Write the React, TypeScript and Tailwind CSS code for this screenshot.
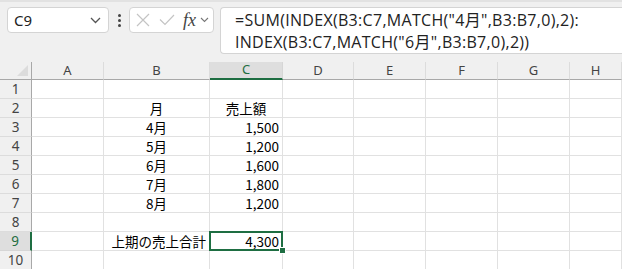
import { Fragment } from "react";

const cols = ["A", "B", "C", "D", "E", "F", "G", "H"];

// cell contents keyed by row number
const data: Record<number, { b?: string; c?: string; bAlign?: string; cAlign?: string }> = {
  2: { b: "月", c: "売上額", cAlign: "center" },
  3: { b: "4月", c: "1,500" },
  4: { b: "5月", c: "1,200" },
  5: { b: "6月", c: "1,600" },
  6: { b: "7月", c: "1,800" },
  7: { b: "8月", c: "1,200" },
  9: { b: "上期の売上合計", c: "4,300", bAlign: "right" },
};

const cellFont = { fontFamily: '"Noto Sans CJK JP", "Noto Sans", sans-serif' };

const App = () => {
  const rows = [1, 2, 3, 4, 5, 6, 7, 8, 9, 10];

  return (
    <div className="w-[622px] h-[269px] overflow-hidden bg-[#f0f0f0] flex flex-col font-['Noto_Sans',sans-serif]">
      {/* Formula bar */}
      <div className="h-[62px] shrink-0 border-t-2 border-[#e2e2e2] flex items-start pt-[5px]">
        {/* Name box */}
        <div className="ml-[7px] w-[102px] h-[26px] rounded-[4px] border border-[#d4d4d4] bg-white flex items-center justify-between pl-[6px] pr-[7px]">
          <span className="text-[15px] text-[#222] leading-none">C9</span>
          <svg width="11" height="7" viewBox="0 0 11 7">
            <path d="M1 1 L5.5 5.5 L10 1" fill="none" stroke="#555" strokeWidth="1.3" />
          </svg>
        </div>
        {/* vertical dots */}
        <div className="w-[20px] h-[26px] flex flex-col items-center justify-center gap-[2px]">
          <span className="w-[3px] h-[3px] rounded-full bg-[#444]" />
          <span className="w-[3px] h-[3px] rounded-full bg-[#444]" />
          <span className="w-[3px] h-[3px] rounded-full bg-[#444]" />
        </div>
        {/* cancel / enter / fx */}
        <div className="w-[85px] h-[26px] rounded-[4px] border border-[#d4d4d4] bg-white flex items-center pl-[6px]">
          <svg width="14" height="14" viewBox="0 0 14 14">
            <path d="M1 1 L13 13 M13 1 L1 13" stroke="#c4c4c4" strokeWidth="1.2" />
          </svg>
          <svg width="16" height="12" viewBox="0 0 16 12" className="ml-[9px]">
            <path d="M1 5.5 L6 10.5 L15 1" fill="none" stroke="#c4c4c4" strokeWidth="1.2" />
          </svg>
          <span className="ml-[8px] text-[18px] italic text-[#444] leading-none font-['Liberation_Serif',serif]">
            fx
          </span>
          <svg width="9" height="6" viewBox="0 0 9 6" className="ml-[4px]">
            <path d="M1 1 L4.5 4.5 L8 1" fill="none" stroke="#777" strokeWidth="1.1" />
          </svg>
        </div>
        {/* Formula */}
        <div className="ml-[6px] flex-1 h-[47px] rounded-l-[4px] border border-r-0 border-[#d4d4d4] bg-white pl-[14px] pt-[1px] text-[16px] tracking-[0.3px] leading-[22px] text-[#222] whitespace-nowrap font-['Open_Sans','Noto_Sans_CJK_JP',sans-serif]">
          <div>=SUM(INDEX(B3:C7,MATCH("4月",B3:B7,0),2):</div>
          <div>INDEX(B3:C7,MATCH("6月",B3:B7,0),2))</div>
        </div>
      </div>

      {/* Sheet grid */}
      <div className="grid grid-cols-[32px_72px_106px_73px_71px_72px_72px_72px_52px] grid-rows-[18px_repeat(10,19px)] bg-white">
        {/* corner */}
        <div className="bg-[#f0f0f0] border-b border-r border-[#a8a8a8] relative">
          <div className="absolute right-[3px] bottom-[3px] w-0 h-0 border-l-[11px] border-l-transparent border-b-[11px] border-b-[#dcdcdc]" />
        </div>
        {cols.map((c) =>
          c === "C" ? (
            <div
              key={c}
              className="bg-[#dedede] border-b-2 border-[#1e6e42] border-r border-r-[#d6d6d6] flex items-center justify-center text-[13px] text-[#1e6e42]"
            >
              {c}
            </div>
          ) : (
            <div
              key={c}
              className="bg-[#f0f0f0] border-b border-b-[#a8a8a8] border-r border-r-[#dcdcdc] flex items-center justify-center text-[13px] text-[#444]"
            >
              {c}
            </div>
          )
        )}

        {rows.map((r) => {
          const d = data[r] || {};
          const active = r === 9;
          return (
            <Fragment key={r}>
              {active ? (
                <div className="bg-[#dedede] border-r-2 border-r-[#1e6e42] border-b border-b-[#d6d6d6] flex items-center justify-center text-[13.5px] text-[#1e6e42]">
                  {r}
                </div>
              ) : (
                <div className="bg-[#f0f0f0] border-r border-r-[#a8a8a8] border-b border-b-[#dcdcdc] flex items-center justify-center text-[13.5px] text-[#444]">
                  {r}
                </div>
              )}
              {cols.map((c) => {
                let text = "";
                let align = "justify-end";
                if (c === "B" && d.b) {
                  text = d.b;
                  align = d.bAlign === "right" ? "justify-end" : "justify-center";
                }
                if (c === "C" && d.c) {
                  text = d.c;
                  align = d.cAlign === "center" ? "justify-center" : "justify-end";
                }
                const isActive = active && c === "C";
                return (
                  <div
                    key={c}
                    style={cellFont}
                    className={`relative border-r border-b border-[#e1e1e1] flex items-center px-[3px] text-[13.5px] text-black whitespace-nowrap ${align} ${isActive ? "z-10" : ""}`}
                  >
                    {text}
                    {isActive && (
                      <>
                        <div className="absolute -left-[1px] -top-[1px] -right-[1px] -bottom-[1px] border-2 border-[#1e6e42]" />
                        <div className="absolute -right-[4px] -bottom-[4px] w-[7px] h-[7px] bg-[#1e6e42] border border-white" />
                      </>
                    )}
                  </div>
                );
              })}
            </Fragment>
          );
        })}
      </div>
    </div>
  );
};

export default App;
